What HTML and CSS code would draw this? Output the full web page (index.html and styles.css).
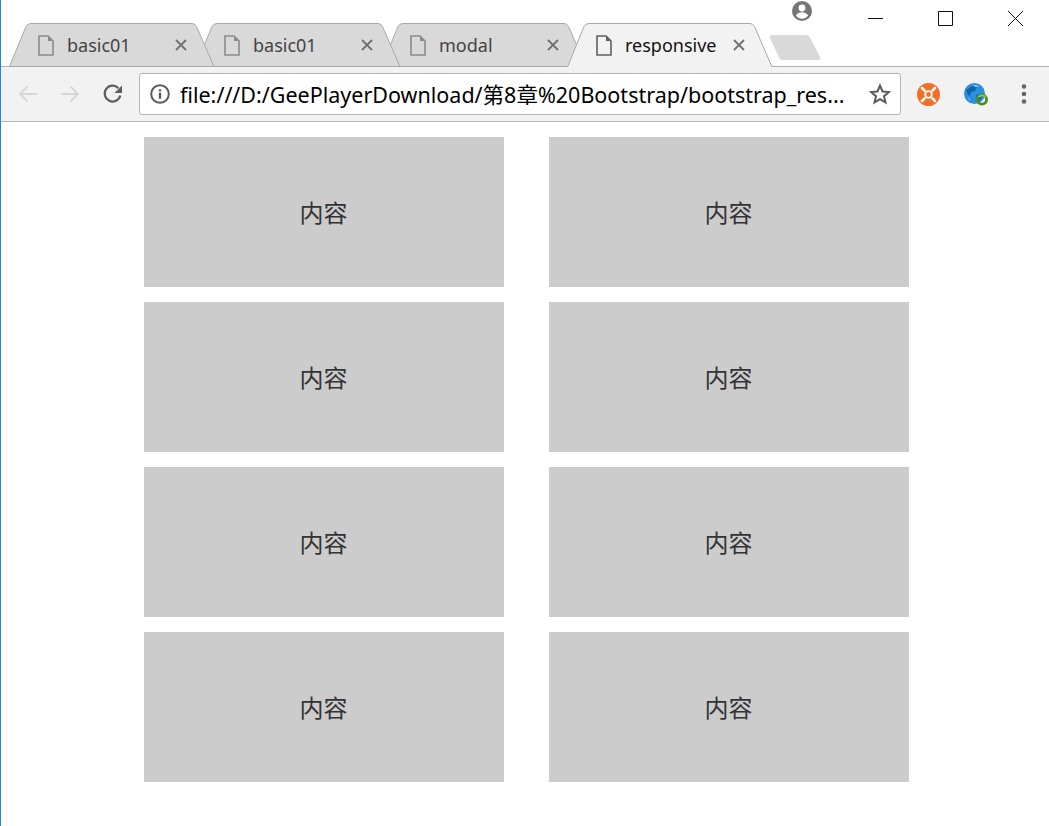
FILE: index.html
```html
<!DOCTYPE html>
<html lang="en">
<head>
    <meta charset="UTF-8">
    <meta name="viewport" content="width=device-width, initial-scale=1.0">
    <title>responsive</title>
    <link rel="stylesheet" href="styles.css">
</head>
<body>

    <!-- Hidden shared shapes -->
    <svg class="defs" width="0" height="0">
        <symbol id="page" viewBox="0 0 16 21">
            <path d="M1 1h9l5 5v14H1z" fill="none" stroke="currentColor" stroke-width="1.600"/>
            <path d="M10 1v5h5z" fill="currentColor"/>
        </symbol>
        <symbol id="close" viewBox="0 0 12 12">
            <path d="M1 1l10 10M11 1L1 11" fill="none" stroke="currentColor" stroke-width="1.800"/>
        </symbol>
    </svg>

    <!-- Tab strip -->
    <div class="tabstrip">
        <div class="tabs">
            <div class="tab tab-first">
                <svg class="tab-shape" width="205" height="44" viewBox="0 0 205 44"><path d="M0.500 43.500L17 3.500Q18.500 0.500 22 0.500H183Q186 0.500 187.500 3.500L205 43.500Z"/></svg>
                <svg class="tab-page"><use href="#page"/></svg>
                <span class="tab-title">basic01</span>
                <svg class="tab-close"><use href="#close"/></svg>
            </div>
            <div class="tab tab-second">
                <svg class="tab-shape" width="205" height="44" viewBox="0 0 205 44"><path d="M0.500 43.500L17 3.500Q18.500 0.500 22 0.500H183Q186 0.500 187.500 3.500L205 43.500Z"/></svg>
                <svg class="tab-page"><use href="#page"/></svg>
                <span class="tab-title">basic01</span>
                <svg class="tab-close"><use href="#close"/></svg>
            </div>
            <div class="tab">
                <svg class="tab-shape" width="205" height="44" viewBox="0 0 205 44"><path d="M0.500 43.500L17 3.500Q18.500 0.500 22 0.500H183Q186 0.500 187.500 3.500L205 43.500Z"/></svg>
                <svg class="tab-page"><use href="#page"/></svg>
                <span class="tab-title">modal</span>
                <svg class="tab-close"><use href="#close"/></svg>
            </div>
            <div class="tab tab-active">
                <svg class="tab-shape" width="205" height="44" viewBox="0 0 205 44"><path d="M0.500 44L17 3.500Q18.500 0.500 22 0.500H183Q186 0.500 187.500 3.500L205 44"/></svg>
                <svg class="tab-page"><use href="#page"/></svg>
                <span class="tab-title">responsive</span>
                <svg class="tab-close"><use href="#close"/></svg>
            </div>
            <svg class="new-tab" width="52" height="27" viewBox="0 0 52 27"><path d="M3 1H37Q40 1 41 3.500L51 23Q52 26 49 26H14Q11 26 10 23.500L1 4Q0 1 3 1z"/></svg>
        </div>

        <svg class="avatar" width="22" height="22" viewBox="0 0 22 22">
            <circle cx="11" cy="11" r="10" fill="#757575"/>
            <circle cx="11" cy="8" r="3.400" fill="#fff"/>
            <path d="M4.800 15.600c1.200-2.300 3.900-3.400 6.200-3.400s5 1.100 6.200 3.400c-1.400 1.900-3.700 3.100-6.200 3.100s-4.800-1.200-6.200-3.100z" fill="#fff"/>
        </svg>

        <div class="window-controls">
            <svg width="15" height="15" viewBox="0 0 15 15"><path d="M0 7.500H15" stroke="#111" fill="none"/></svg>
            <svg width="15" height="15" viewBox="0 0 15 15"><path d="M0.500 0.500H14.500V14.500H0.500z" stroke="#111" fill="none"/></svg>
            <svg width="15" height="15" viewBox="0 0 15 15"><path d="M0 0L15 15M15 0L0 15" stroke="#111" fill="none"/></svg>
        </div>
    </div>

    <!-- Toolbar -->
    <div class="toolbar">
        <div class="nav-buttons">
            <svg width="20" height="18" viewBox="0 0 20 18"><path d="M19 9H2M9.500 1.500L2 9l7.500 7.500" fill="none" stroke="#d6d6d6" stroke-width="1.800"/></svg>
            <svg width="20" height="18" viewBox="0 0 20 18"><path d="M1 9H18M10.500 1.500L18 9l-7.500 7.500" fill="none" stroke="#d6d6d6" stroke-width="1.800"/></svg>
            <svg width="22" height="22" viewBox="0 0 22 22">
                <path d="M18.300 12.500A7.900 7.900 0 1 1 16.400 5.200" fill="none" stroke="#5f5f5f" stroke-width="2.200"/>
                <path d="M20 2.500V10h-7.500z" fill="#5f5f5f"/>
            </svg>
        </div>

        <div class="address-bar">
            <svg class="info-icon" width="20" height="20" viewBox="0 0 20 20">
                <circle cx="10" cy="10" r="8.800" fill="none" stroke="#5a5a5a" stroke-width="2"/>
                <path d="M8.800 8.800h2.400v5.900H8.800zM8.800 5.300h2.400v2.300H8.800z" fill="#5a5a5a"/>
            </svg>
            <span class="url">file:///D:/GeePlayerDownload/第8章%20Bootstrap/bootstrap_res...</span>
            <svg class="star-icon" width="22" height="22" viewBox="0 0 22 22">
                <path d="M11 2.600l2.500 5.900 6.400 0.500-4.900 4.200 1.500 6.200L11 16.100l-5.500 3.300 1.500-6.200-4.900-4.200 6.400-0.500z" fill="none" stroke="#5a5a5a" stroke-width="2"/>
            </svg>
        </div>

        <div class="extensions">
            <svg width="23" height="23" viewBox="0 0 23 23">
                <circle cx="11.500" cy="11.500" r="11.500" fill="#f26f23"/>
                <circle cx="11.500" cy="11.500" r="3.300" fill="none" stroke="#fff" stroke-width="1.800"/>
                <path d="M5 5l2.500 2.500M18 5l-2.500 2.500M5 18l2.500-2.500M18 18l-2.500-2.500" stroke="#fff" stroke-width="2.600" stroke-linecap="round"/>
            </svg>
            <svg width="25" height="23" viewBox="0 0 25 23">
                <circle cx="10.500" cy="10.500" r="10.500" fill="#2a90dc"/>
                <path d="M2 7l6-4 5 1-2 4-4 1-1 4-2-1zM12 12l5-1 2 2-4 5-2-2z" fill="#0f66ae"/>
                <path d="M9 2l4 0 2 2-4 0zM4 14l3 3-2 0z" fill="#7cc4f2"/>
                <circle cx="18" cy="16.500" r="4.600" fill="none" stroke="#4f8a1c" stroke-width="2.800"/>
                <path d="M14.500 14a4.600 4.600 0 0 1 7 0" fill="none" stroke="#8cc63f" stroke-width="2"/>
            </svg>
            <svg class="kebab" width="6" height="22" viewBox="0 0 6 22">
                <circle cx="3" cy="3.500" r="2.300" fill="#666"/>
                <circle cx="3" cy="11" r="2.300" fill="#666"/>
                <circle cx="3" cy="18.500" r="2.300" fill="#666"/>
            </svg>
        </div>
    </div>

    <!-- Page content -->
    <div class="content">
        <div class="box">内容</div>
        <div class="box">内容</div>
        <div class="box">内容</div>
        <div class="box">内容</div>
        <div class="box">内容</div>
        <div class="box">内容</div>
        <div class="box">内容</div>
        <div class="box">内容</div>
    </div>

</body>
</html>
```

FILE: styles.css
```css
/* General styles */
body {
    margin: 0;
    height: 826px;
    box-sizing: border-box;
    overflow: hidden;
    background-color: #fff;
    border-left: 1px solid #1e88e5;
    font-family: "Noto Sans", "Noto Sans CJK SC", sans-serif;
    color: #333;
}

.defs {
    display: block;
}

/* Tab strip */
.tabstrip {
    display: flex;
    align-items: flex-start;
    height: 66px;
    border-bottom: 1px solid #b0b0b0;
}

.tabs {
    display: flex;
    align-items: flex-start;
    margin-top: 23px;
    margin-left: 8px;
}

.tab {
    position: relative;
    display: flex;
    align-items: center;
    flex: none;
    width: 205px;
    height: 44px;
    margin-right: -19px;
    color: #444;
}

/* Earlier tabs sit over the later ones */
.tab-first {
    z-index: 3;
}

.tab-second {
    z-index: 2;
}

.tab-shape {
    position: absolute;
    left: 0;
    top: 0;
}

.tab-shape path {
    fill: #d9d9d9;
    stroke: #a8a8a8;
}

.tab-active {
    z-index: 4;
    color: #111;
}

.tab-active .tab-shape path {
    fill: #f2f2f2;
}

.tab-page {
    position: relative;
    flex: none;
    width: 16px;
    height: 21px;
    margin-left: 29px;
    color: #8a8a8a;
}

.tab-active .tab-page {
    color: #5f5f5f;
}

.tab-title {
    position: relative;
    flex: none;
    width: 107px;
    margin-left: 13px;
    font-size: 18px;
}

.tab-close {
    position: relative;
    flex: none;
    width: 12px;
    height: 12px;
    margin-left: 1px;
    color: #707070;
}

.new-tab {
    flex: none;
    margin-left: 16px;
    margin-top: 11px;
    fill: #d9d9d9;
}

.avatar {
    flex: none;
    margin-left: -30px;
    margin-top: 0;
}

.window-controls {
    display: flex;
    gap: 55px;
    margin-left: auto;
    margin-right: 26px;
    margin-top: 11px;
}

/* Toolbar */
.toolbar {
    display: flex;
    align-items: center;
    height: 54px;
    background-color: #f2f2f2;
    border-bottom: 1px solid #b8b8b8;
}

.nav-buttons {
    display: flex;
    align-items: center;
    gap: 22px;
    width: 138px;
    padding-left: 17px;
    box-sizing: border-box;
}

.address-bar {
    display: flex;
    align-items: center;
    width: 762px;
    height: 42px;
    box-sizing: border-box;
    background-color: #fff;
    border: 1px solid #b5b5b5;
    border-radius: 3px;
}

.info-icon {
    flex: none;
    margin-left: 10px;
}

.url {
    flex: 1;
    margin-left: 10px;
    padding-bottom: 2px;
    font-size: 21.500px;
    color: #000;
    white-space: nowrap;
    overflow: hidden;
}

.star-icon {
    flex: none;
    margin-right: 9px;
}

.extensions {
    display: flex;
    align-items: center;
    margin-left: 16px;
    gap: 24px;
}

.kebab {
    margin-left: 8px;
}

/* Content grid */
.content {
    display: grid;
    grid-template-columns: 360px 360px;
    grid-auto-rows: 150px;
    column-gap: 45px;
    row-gap: 15px;
    padding: 15px 0 0 143px;
}

.box {
    display: flex;
    align-items: center;
    justify-content: center;
    box-sizing: border-box;
    padding-bottom: 1px;
    padding-right: 1px;
    background-color: #ccc;
    font-size: 24px;
    color: #333;
}
```
